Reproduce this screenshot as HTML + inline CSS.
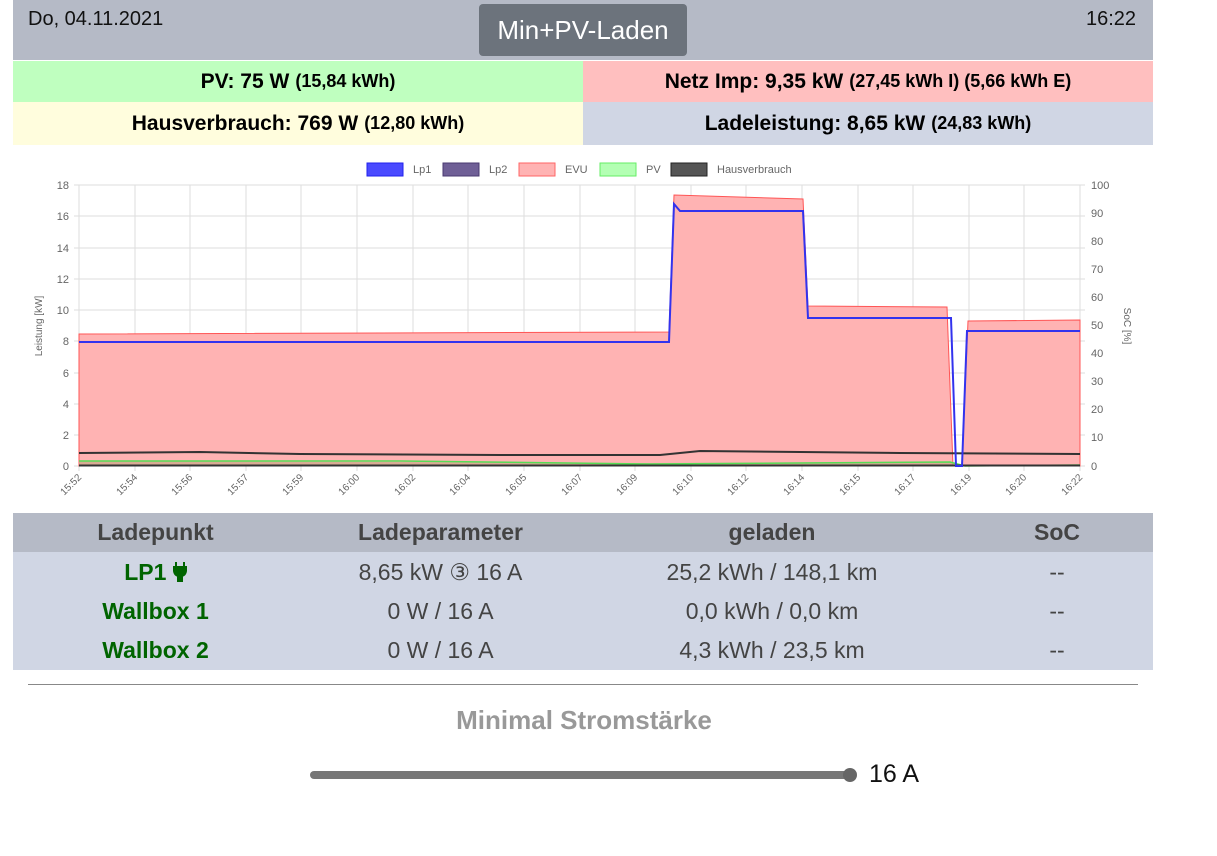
<!DOCTYPE html><html><head><style>
body{margin:0;background:#fff;font-family:"Liberation Sans",sans-serif;width:1217px;height:856px;overflow:hidden;position:relative}
.a{position:absolute}
.c{display:flex;align-items:center;justify-content:center;font-weight:bold;font-size:21px;color:#000}
.c small{font-size:18px;margin-left:6px}
td{text-align:center;font-size:23px;color:#444;padding:0;height:39px}
.g{color:#006400;font-weight:bold}
</style></head><body>
<div class="a" style="left:13px;top:0;width:1140px;height:60px;background:#b5bac6"></div>
<div class="a" style="left:28px;top:8px;font-size:20px;color:#111">Do, 04.11.2021</div>
<div class="a" style="left:1086px;top:8px;font-size:20px;color:#111">16:22</div>
<div class="a" style="left:479px;top:4px;width:208px;height:52px;background:#6c737c;border-radius:4px;color:#fff;font-size:26px;display:flex;align-items:center;justify-content:center">Min+PV-Laden</div>
<div class="a c" style="left:13px;top:61px;width:570px;height:41px;background:#bfffbf">PV: 75 W <small>(15,84 kWh)</small></div>
<div class="a c" style="left:583px;top:61px;width:570px;height:41px;background:#ffbfbf">Netz Imp: 9,35 kW <small>(27,45 kWh I) (5,66 kWh E)</small></div>
<div class="a c" style="left:13px;top:102px;width:570px;height:43px;background:#fffddd">Hausverbrauch: 769 W <small>(12,80 kWh)</small></div>
<div class="a c" style="left:583px;top:102px;width:570px;height:43px;background:#d0d6e4">Ladeleistung: 8,65 kW <small>(24,83 kWh)</small></div>
<svg class="a" style="left:0;top:155px" width="1217" height="355" viewBox="0 155 1217 355" font-family="Liberation Sans" font-size="11" fill="#666">
<g font-size="11">
<rect x="367" y="163" width="36" height="13" fill="#4a4aff" stroke="#2222ee"/><text x="413" y="173">Lp1</text>
<rect x="443" y="163" width="36" height="13" fill="#6f5f96" stroke="#4a3a70"/><text x="489" y="173">Lp2</text>
<rect x="519" y="163" width="36" height="13" fill="#ffb3b3" stroke="#ff6666"/><text x="565" y="173">EVU</text>
<rect x="600" y="163" width="36" height="13" fill="#b3ffb3" stroke="#66ee66"/><text x="646" y="173">PV</text>
<rect x="671" y="163" width="36" height="13" fill="#555" stroke="#222"/><text x="717" y="173">Hausverbrauch</text>
</g>
<g stroke="#ddd" stroke-width="1">
<line x1="74" y1="185" x2="1085" y2="185"/><line x1="74" y1="216" x2="1085" y2="216"/><line x1="74" y1="248" x2="1085" y2="248"/><line x1="74" y1="279" x2="1085" y2="279"/><line x1="74" y1="310" x2="1085" y2="310"/><line x1="74" y1="341" x2="1085" y2="341"/><line x1="74" y1="373" x2="1085" y2="373"/><line x1="74" y1="404" x2="1085" y2="404"/><line x1="74" y1="435" x2="1085" y2="435"/><line x1="74" y1="466" x2="1085" y2="466"/>
<path d="M79 185V471M135 185V471M190 185V471M246 185V471M301 185V471M357 185V471M413 185V471M468 185V471M524 185V471M580 185V471M635 185V471M691 185V471M746 185V471M802 185V471M858 185V471M913 185V471M969 185V471M1024 185V471M1080 185V471"/>
</g>
<path d="M79 334L669 332L674 195L803 199L808 306L947 307L953 466L962 466L968 321L1080 320L1080 466L79 466Z" fill="#ffb3b3" stroke="#ff5555" stroke-width="1"/>
<path d="M79 461L650 463L950 462L960 466L1080 465L1080 466L79 466Z" fill="#c8aa88" opacity=".7"/>
<path d="M79 461L400 461L650 464L950 462L965 466L1080 465" fill="none" stroke="#55dd55" stroke-width="1.5"/>
<path d="M79 453L200 452L300 454L500 455L660 455L700 451L900 453L1080 454" fill="none" stroke="#333" stroke-width="2"/>
<path d="M79 465.5H1080" stroke="#333" stroke-width="2"/>
<path d="M79 342L669 342L674 204L680 211L803 211L808 318L951 318L956 466L962 466L967 331L1080 331" fill="none" stroke="#3333ee" stroke-width="2"/>
<g text-anchor="end"><text x="69" y="189">18</text><text x="69" y="220">16</text><text x="69" y="252">14</text><text x="69" y="283">12</text><text x="69" y="314">10</text><text x="69" y="345">8</text><text x="69" y="377">6</text><text x="69" y="408">4</text><text x="69" y="439">2</text><text x="69" y="470">0</text></g>
<g><text x="1091" y="189">100</text><text x="1091" y="217">90</text><text x="1091" y="245">80</text><text x="1091" y="273">70</text><text x="1091" y="301">60</text><text x="1091" y="329">50</text><text x="1091" y="357">40</text><text x="1091" y="385">30</text><text x="1091" y="413">20</text><text x="1091" y="441">10</text><text x="1091" y="470">0</text></g>
<text transform="translate(42 326) rotate(-90)" text-anchor="middle" font-size="10">Leistung [kW]</text>
<text transform="translate(1124 326) rotate(90)" text-anchor="middle" font-size="10">SoC [%]</text>
<g text-anchor="end" font-size="10">
<text transform="translate(82 478) rotate(-45)">15:52</text><text transform="translate(138 478) rotate(-45)">15:54</text><text transform="translate(193 478) rotate(-45)">15:56</text><text transform="translate(249 478) rotate(-45)">15:57</text><text transform="translate(304 478) rotate(-45)">15:59</text><text transform="translate(360 478) rotate(-45)">16:00</text><text transform="translate(416 478) rotate(-45)">16:02</text><text transform="translate(471 478) rotate(-45)">16:04</text><text transform="translate(527 478) rotate(-45)">16:05</text><text transform="translate(583 478) rotate(-45)">16:07</text><text transform="translate(638 478) rotate(-45)">16:09</text><text transform="translate(694 478) rotate(-45)">16:10</text><text transform="translate(749 478) rotate(-45)">16:12</text><text transform="translate(805 478) rotate(-45)">16:14</text><text transform="translate(861 478) rotate(-45)">16:15</text><text transform="translate(916 478) rotate(-45)">16:17</text><text transform="translate(972 478) rotate(-45)">16:19</text><text transform="translate(1027 478) rotate(-45)">16:20</text><text transform="translate(1083 478) rotate(-45)">16:22</text>
</g>
</svg>
<table class="a" style="left:13px;top:513px;width:1140px;border-collapse:collapse;table-layout:fixed">
<tr style="background:#b5bac6"><td style="height:37px;font-weight:bold;width:285px">Ladepunkt</td><td style="font-weight:bold;width:285px">Ladeparameter</td><td style="font-weight:bold;width:378px">geladen</td><td style="font-weight:bold">SoC</td></tr>
<tr style="background:#d0d6e4"><td class="g" style="height:40px">LP1 <svg width="14" height="20" viewBox="0 0 14 20" style="vertical-align:-2px"><path d="M3 0v5M11 0v5M1 5h12v4a6 6 0 0 1-4 5v6h-4v-6a6 6 0 0 1-4-5z" fill="#006400" stroke="#006400" stroke-width="2"/></svg></td><td>8,65 kW ③ 16 A</td><td>25,2 kWh / 148,1 km</td><td>--</td></tr>
<tr style="background:#d0d6e4"><td class="g">Wallbox 1</td><td>0 W / 16 A</td><td>0,0 kWh / 0,0 km</td><td>--</td></tr>
<tr style="background:#d0d6e4"><td class="g" style="height:38px">Wallbox 2</td><td>0 W / 16 A</td><td>4,3 kWh / 23,5 km</td><td>--</td></tr>
</table>
<div class="a" style="left:28px;top:684px;width:1110px;height:1px;background:#888"></div>
<div class="a" style="left:0;width:1168px;top:705px;text-align:center;font-size:26px;font-weight:bold;color:#999">Minimal Stromstärke</div>
<div class="a" style="left:310px;top:771px;width:540px;height:8px;background:#777;border-radius:4px"></div>
<div class="a" style="left:843px;top:768px;width:14px;height:14px;background:#666;border-radius:50%"></div>
<div class="a" style="left:869px;top:760px;font-size:25px;color:#111">16 A</div>
</body></html>
